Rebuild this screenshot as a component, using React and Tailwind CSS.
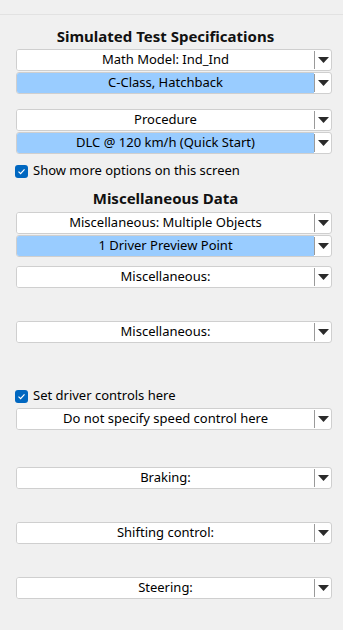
import React from 'react';

const font = { fontFamily: '"Noto Sans", "Open Sans", Arial, sans-serif' };

const Arrow = () => (
    <svg width="11" height="6" viewBox="0 0 11 6" className="block">
        <polygon points="0,0 11,0 5.5,6" fill="#2b2b2b" />
    </svg>
);

const Dropdown = ({ label, selected, className = '' }) => (
    <div className={`flex h-[22px] rounded-[3px] border border-[#cfcfcf] bg-white overflow-hidden ${className}`}>
        <div className={`flex-1 flex items-center justify-center text-[13px] text-black ${selected ? 'bg-[#99ccff]' : 'bg-white'}`}>
            {label}
        </div>
        <div className="w-px bg-[#9a9a9a] my-[1px]" />
        <div className="w-[16px] flex items-center justify-center">
            <Arrow />
        </div>
    </div>
);

const Check = ({ label, className = '' }) => (
    <div className={`flex items-center h-[18px] ${className}`}>
        <div className="w-[13px] h-[13px] rounded-[3px] bg-[#0067c0] flex items-center justify-center">
            <svg width="9" height="9" viewBox="0 0 9 9">
                <path d="M1.5 4.6 L3.6 6.6 L7.5 2.4" stroke="white" strokeWidth="1.2" fill="none" />
            </svg>
        </div>
        <span className="ml-[5px] text-[13px] text-black">{label}</span>
    </div>
);

const Heading = ({ children, className = '' }) => (
    <div className={`h-[22px] leading-[22px] pr-[17px] text-center font-bold text-[15px] text-[#111] ${className}`}>{children}</div>
);

export default function App() {
    return (
        <div className="w-[343px] h-[630px] bg-[#f0f0f0] overflow-hidden" style={font}>
            <div className="h-[14px]" />
            <div className="h-px bg-[#e2e2e2]" />
            <div className="pl-[16px] pr-[11px]">
                <Heading className="mt-[10px]">Simulated Test Specifications</Heading>
                <Dropdown className="mt-[2px]" label="Math Model: Ind_Ind" />
                <Dropdown className="mt-[1px]" label="C-Class, Hatchback" selected />

                <Dropdown className="mt-[15px]" label="Procedure" />
                <Dropdown className="mt-[1px]" label="DLC @ 120 km/h (Quick Start)" selected />

                <Check className="mt-[8px] -ml-[1px]" label="Show more options on this screen" />

                <Heading className="mt-[7px]">Miscellaneous Data</Heading>
                <Dropdown className="mt-[3px]" label="Miscellaneous: Multiple Objects" />
                <Dropdown className="mt-[1px]" label="1 Driver Preview Point" selected />

                <Dropdown className="mt-[9px]" label="Miscellaneous:" />
                <Dropdown className="mt-[33px]" label="Miscellaneous:" />

                <Check className="mt-[44px] -ml-[1px]" label="Set driver controls here" />
                <Dropdown className="mt-[3px]" label="Do not specify speed control here" />

                <Dropdown className="mt-[37px]" label="Braking:" />
                <Dropdown className="mt-[33px]" label="Shifting control:" />
                <Dropdown className="mt-[33px]" label="Steering:" />
            </div>
        </div>
    );
}
